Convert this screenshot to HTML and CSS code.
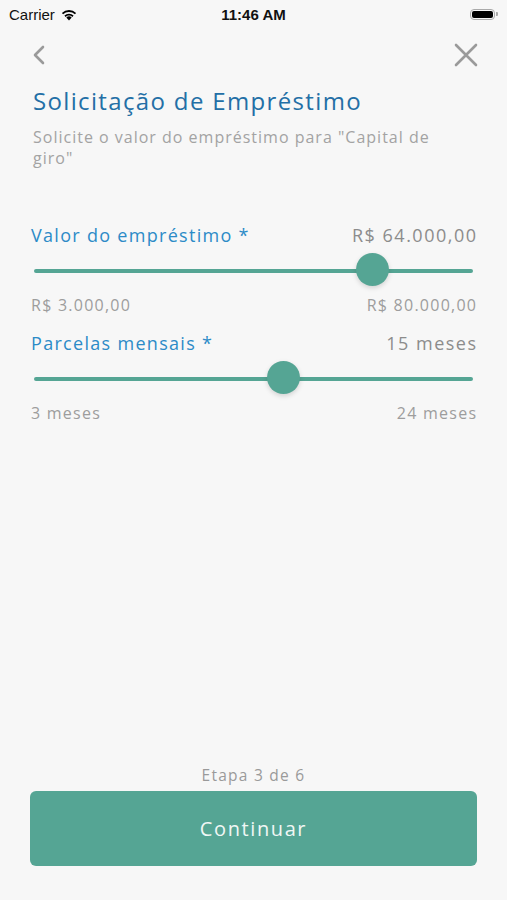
FILE: index.html
```html
<!DOCTYPE html>
<html lang="pt-BR">
<head>
    <meta charset="UTF-8">
    <meta name="viewport" content="width=device-width, initial-scale=1.0">
    <title>Solicitação de Empréstimo</title>
    <link rel="stylesheet" href="styles.css">
</head>
<body>
    <div class="screen">
        <div class="status-bar">
            <div class="carrier">
                Carrier
                <svg class="wifi" width="18" height="13" viewBox="0 0 18 13">
                    <path d="M9 12.5 L6.3 9.6 A4 4 0 0 1 11.7 9.6 Z" fill="#000"/>
                    <path d="M4.4 7.6 A6.6 6.6 0 0 1 13.6 7.6 L12.4 8.9 A4.9 4.9 0 0 0 5.6 8.9 Z" fill="#000"/>
                    <path d="M1.9 5 A10.2 10.2 0 0 1 16.1 5 L14.9 6.3 A8.4 8.4 0 0 0 3.1 6.3 Z" fill="#000"/>
                </svg>
            </div>
            <div class="time">11:46 AM</div>
            <div class="battery">
                <span class="battery-body"><span class="battery-fill"></span></span>
                <span class="battery-tip"></span>
            </div>
        </div>

        <div class="nav">
            <svg width="14" height="20" viewBox="0 0 14 20">
                <path d="M11 2 L3 10 L11 18" fill="none" stroke="#9a9a9a" stroke-width="2.6" stroke-linecap="round" stroke-linejoin="round"/>
            </svg>
            <svg width="26" height="26" viewBox="0 0 26 26">
                <path d="M3 3 L23 23 M23 3 L3 23" fill="none" stroke="#9a9a9a" stroke-width="2.6" stroke-linecap="round"/>
            </svg>
        </div>

        <div class="content">
            <h1 class="title">Solicitação de Empréstimo</h1>
            <p class="subtitle">Solicite o valor do empréstimo para "Capital de giro"</p>

            <div class="field first">
                <div class="field-head">
                    <span class="field-label">Valor do empréstimo *</span>
                    <span class="field-value">R$ 64.000,00</span>
                </div>
                <div class="slider">
                    <div class="track"></div>
                    <div class="thumb" style="left: 77.0%"></div>
                </div>
                <div class="range">
                    <span>R$ 3.000,00</span>
                    <span class="range-max">R$ 80.000,00</span>
                </div>
            </div>

            <div class="field">
                <div class="field-head">
                    <span class="field-label">Parcelas mensais *</span>
                    <span class="field-value">15 meses</span>
                </div>
                <div class="slider">
                    <div class="track"></div>
                    <div class="thumb" style="left: 56.7%"></div>
                </div>
                <div class="range">
                    <span>3 meses</span>
                    <span class="range-max">24 meses</span>
                </div>
            </div>
        </div>

        <div class="footer">
            <p class="step">Etapa 3 de 6</p>
            <button class="continue">Continuar</button>
        </div>
    </div>
</body>
</html>
```

FILE: styles.css
```css
body {
    margin: 0;
    background-color: #f7f7f7;
    font-family: 'Open Sans', sans-serif;
}
.screen {
    height: 900px;
    display: flex;
    flex-direction: column;
}
.status-bar {
    height: 28px;
    display: flex;
    align-items: center;
    justify-content: space-between;
    padding: 0 9px 0 9px;
    font-family: 'Liberation Sans', Arial, sans-serif;
    font-size: 15px;
    color: #111;
}
.carrier {
    width: 120px;
    display: flex;
    align-items: center;
    gap: 5px;
}
.time {
    font-weight: bold;
}
.battery {
    width: 120px;
    display: flex;
    align-items: center;
    justify-content: flex-end;
}
.battery-body {
    width: 25px;
    height: 11px;
    border: 1px solid #aaa;
    border-radius: 4px;
    padding: 1px;
    box-sizing: border-box;
    display: flex;
}
.battery-fill {
    flex: 1;
    background: #000;
    border-radius: 2px;
}
.battery-tip {
    width: 2px;
    height: 4px;
    background: #aaa;
    border-radius: 0 1px 1px 0;
    margin-left: 1px;
}
.nav {
    display: flex;
    justify-content: space-between;
    align-items: center;
    padding: 14px 28px 0 32px;
    height: 26px;
}
.content {
    padding: 0 31px 0 31px;
    flex: 1;
}
.title {
    margin: 16px 0 0 2px;
    font-size: 24px;
    font-weight: normal;
    color: #236fa6;
    letter-spacing: 1.35px;
}
.subtitle {
    margin: 10px 0 0 2px;
    font-size: 16px;
    line-height: 21px;
    color: #a3a3a3;
    letter-spacing: 1px;
    max-width: 420px;
}
.field.first {
    margin-top: 54px;
}
.field {
    margin-top: 15px;
}
.field-head {
    display: flex;
    justify-content: space-between;
    align-items: baseline;
    font-size: 18px;
    line-height: 24px;
}
.field-label {
    color: #2c8bc7;
    letter-spacing: 1.3px;
}
.field-value {
    color: #8c8c8c;
    letter-spacing: 1.5px;
    margin-right: -1.5px;
}
.slider {
    position: relative;
    height: 36px;
    margin: 6px 3px 0 3px;
}
.track {
    position: absolute;
    left: 0;
    right: 0;
    top: 16px;
    height: 4px;
    border-radius: 2px;
    background: #55a594;
}
.thumb {
    position: absolute;
    top: 0;
    width: 33px;
    height: 33px;
    margin-left: -16px;
    border-radius: 50%;
    background: #55a594;
    box-shadow: 0 2px 5px rgba(0, 0, 0, 0.15);
}
.range {
    display: flex;
    justify-content: space-between;
    margin-top: 5px;
    font-size: 16px;
    line-height: 22px;
    color: #9d9d9d;
    letter-spacing: 1.25px;
}
.range-max {
    margin-right: -1.25px;
}
.footer {
    padding: 0 30px 34px 30px;
    text-align: center;
}
.step {
    margin: 0 0 5px 0;
    font-size: 15.5px;
    line-height: 22px;
    color: #9a9a9a;
    letter-spacing: 1.25px;
}
.continue {
    width: 100%;
    height: 75px;
    border: none;
    border-radius: 6px;
    background-color: #55a594;
    color: #f0f7f5;
    font-family: 'Open Sans', sans-serif;
    font-size: 20px;
    letter-spacing: 1.6px;
}
```
